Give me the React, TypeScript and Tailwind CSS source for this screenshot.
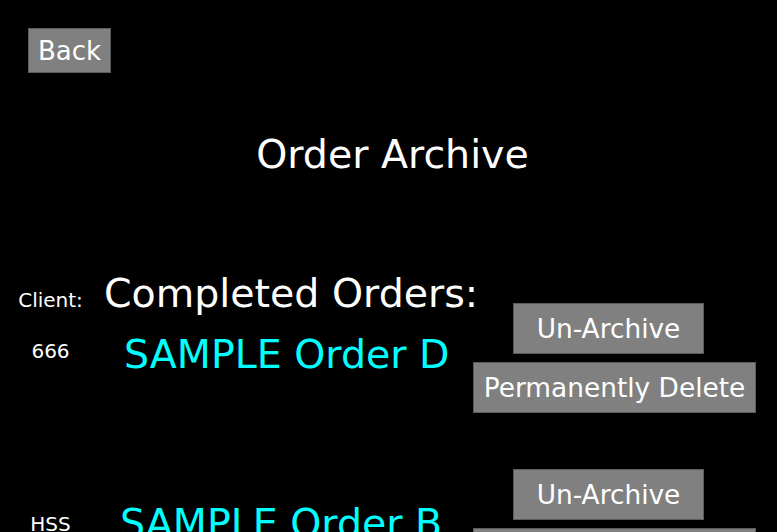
const ORDERS = [
  {
    client: "666",
    name: "SAMPLE Order D",
    clientClass: "mt-[37px]",
    nameClass: "mt-[28px] pl-[23px]",
  },
  {
    client: "HSS",
    name: "SAMPLE Order B",
    clientClass: "mt-[44px]",
    nameClass: "mt-[31px] pl-[19px]",
  },
];

function GrayButton({ label, className }: { label: string; className: string }) {
  return (
    <button
      className={`flex items-center justify-center h-[51px] bg-[#808080] border border-[#5c5c5c] text-[26.4px] leading-[30px] text-white ${className}`}
    >
      {label}
    </button>
  );
}

export default function App() {
  return (
    <div className="min-h-screen bg-black text-white font-['DejaVu_Sans',sans-serif] overflow-hidden">
      {/* Back */}
      <div className="pt-[28px] pl-[28px]">
        <button className="flex items-center h-[45px] px-[9px] bg-[#808080] border border-[#5c5c5c] text-[26px] leading-[30px] text-white">
          Back
        </button>
      </div>

      {/* Title */}
      <h1 className="mt-[58px] pl-[8px] text-center text-[39.5px] leading-[46px]">Order Archive</h1>

      {/* Heading row */}
      <div className="mt-[93px] flex items-baseline">
        <div className="w-[101px] text-center text-[20px]">Client:</div>
        <div className="ml-[3px] text-[39.5px] leading-[46px]">Completed Orders:</div>
      </div>

      {/* Orders */}
      <div className="-mt-[13px] flex flex-col gap-[56px]">
        {ORDERS.map((order) => (
          <div key={order.name} className="flex items-start">
            <div className={`w-[101px] shrink-0 text-center text-[20px] leading-[23px] ${order.clientClass}`}>
              {order.client}
            </div>
            <div className={`w-[372px] shrink-0 text-[39.5px] leading-[46px] text-[#00ffff] ${order.nameClass}`}>
              {order.name}
            </div>
            <div className="flex flex-col items-start gap-[8px]">
              <GrayButton label="Un-Archive" className="ml-[40px] w-[191px]" />
              <GrayButton label="Permanently Delete" className="w-[283px]" />
            </div>
          </div>
        ))}
      </div>
    </div>
  );
}
